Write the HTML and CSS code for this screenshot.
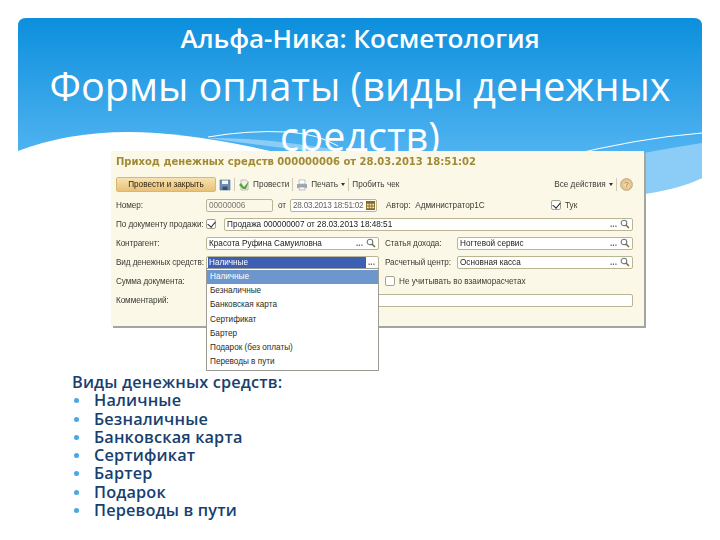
FILE: index.html
```html
<!DOCTYPE html>
<html lang="ru">
<head>
<meta charset="utf-8">
<title>Формы оплаты</title>
<link rel="stylesheet" href="styles.css">
</head>
<body>
<svg class="defs" width="0" height="0" aria-hidden="true">
  <symbol id="i-search" viewBox="0 0 10 10"><circle cx="4" cy="4" r="2.8" fill="#fff" stroke="#6b7a80" stroke-width="1.1"/><path d="M6 6 9 9" stroke="#8a6a20" stroke-width="1.5"/></symbol>
</svg>
<main class="slide">
  <svg class="wave" viewBox="0 0 684 180" preserveAspectRatio="none" aria-hidden="true">
    <defs><linearGradient id="sky" x1="0" y1="0" x2="0" y2="1"><stop offset="0" stop-color="#0c8fdc"/><stop offset=".75" stop-color="#4eb2f0"/><stop offset="1" stop-color="#55b6f1"/></linearGradient></defs>
    <path d="M0 8Q0 0 8 0H676Q684 0 684 8V160Q650 170 600 176L0 176Z" fill="url(#sky)"/>
    <path d="M190 120Q260 118 420 150L627 176Q665 170 684 160V125Q620 135 550 150Q400 150 190 120Z" fill="#8ccdf8"/>
    <path d="M190 119Q230 112 270 114Q300 116 320 128M684 115Q620 120 540 140" fill="none" stroke="#fff" stroke-width="1"/>
    <path d="M0 133Q50 114 110 114Q190 114 320 150V180H0Z" fill="#fff"/>
  </svg>
  <header class="head">
    <p class="subtitle">Альфа-Ника: Косметология</p>
    <h1 class="title">Формы оплаты (виды денежных средств)</h1>
  </header>

  <section class="panel">
    <h2 class="panel-title">Приход денежных средств 000000006 от 28.03.2013 18:51:02</h2>
    <div class="toolbar">
      <button class="primary" type="button">Провести и закрыть</button>
      <svg class="tool" viewBox="0 0 12 12" aria-hidden="true"><path d="M1 1H11V11H1Z" fill="#6f8fb5" stroke="#4a6a95" stroke-width=".6"/><path d="M3 1.5H9V5H3Z" fill="#f4f6f8"/><path d="M3.5 7.5H8.5V11H3.5Z" fill="#39506e"/></svg>
      <span class="sep"></span>
      <svg class="tool" viewBox="0 0 12 12" aria-hidden="true"><path d="M3 1H8L10 3V11H3Z" fill="#f2f2ea" stroke="#9a9a90" stroke-width=".6"/><path d="M1 6 3 4 6 8 11 2 8 10H5Z" fill="#5aa53a"/></svg>
      <span class="tool-text">Провести</span>
      <span class="sep"></span>
      <svg class="tool" viewBox="0 0 12 12" aria-hidden="true"><path d="M3 1H9V5H3Z" fill="#fff" stroke="#888" stroke-width=".5"/><path d="M1 5H11V9H1Z" fill="#9aa8b8"/><path d="M3 8H9V11H3Z" fill="#f4f4f4" stroke="#888" stroke-width=".5"/></svg>
      <span class="tool-text">Печать <i class="caret"></i></span>
      <span class="sep"></span>
      <span class="tool-text">Пробить чек</span>
      <span class="tool-text push">Все действия <i class="caret"></i></span>
      <span class="sep"></span>
      <span class="help">?</span>
    </div>

    <div class="form">
      <div class="row">
        <span class="label">Номер:</span>
        <span class="field w-number">00000006</span>
        <span class="inline-label">от</span>
        <span class="field w-date">28.03.2013 18:51:02
          <svg class="cal" viewBox="0 0 10 10" aria-hidden="true"><path d="M0 0H10V10H0Z" fill="#8a6a20"/><path d="M1 3H3V5H1ZM4 3H6V5H4ZM7 3H9V5H7ZM1 6H3V8H1ZM4 6H6V8H4ZM7 6H9V8H7Z" fill="#f3e6c0"/></svg>
        </span>
        <span class="author">Автор:&nbsp; Администратор1С</span>
        <span class="check on"></span>
        <span class="check-text">Тук</span>
      </div>
      <div class="row">
        <span class="label">По документу продажи:</span>
        <span class="check on"></span>
        <span class="field w-doc">Продажа 000000007 от 28.03.2013 18:48:51
          <span class="dots">...</span><svg class="mag" aria-hidden="true"><use href="#i-search"/></svg>
        </span>
      </div>
      <div class="row">
        <span class="label">Контрагент:</span>
        <span class="field w-left">Красота Руфина Самуиловна
          <span class="dots">...</span><svg class="mag" aria-hidden="true"><use href="#i-search"/></svg>
        </span>
        <span class="label-2">Статья дохода:</span>
        <span class="field w-right">Ногтевой сервис
          <span class="dots">...</span><svg class="mag" aria-hidden="true"><use href="#i-search"/></svg>
        </span>
      </div>
      <div class="row row-select">
        <span class="label">Вид денежных средств:</span>
        <span class="field w-left field-select"><span class="selected">Наличные</span><span class="dots">...</span></span>
        <span class="label-2">Расчетный центр:</span>
        <span class="field w-right">Основная касса
          <span class="dots">...</span><svg class="mag" aria-hidden="true"><use href="#i-search"/></svg>
        </span>
        <ul class="dropdown">
          <li class="active">Наличные</li>
          <li>Безналичные</li>
          <li>Банковская карта</li>
          <li>Сертификат</li>
          <li>Бартер</li>
          <li>Подарок (без оплаты)</li>
          <li>Переводы в пути</li>
        </ul>
      </div>
      <div class="row">
        <span class="label">Сумма документа:</span>
        <span class="spacer"></span>
        <span class="check"></span>
        <span class="check-text">Не учитывать во взаиморасчетах</span>
      </div>
      <div class="row">
        <span class="label">Комментарий:</span>
        <span class="field w-full"></span>
      </div>
    </div>
  </section>

  <section class="types">
    <p class="types-head">Виды денежных средств:</p>
    <ul class="types-list">
      <li>Наличные</li>
      <li>Безналичные</li>
      <li>Банковская карта</li>
      <li>Сертификат</li>
      <li>Бартер</li>
      <li>Подарок</li>
      <li>Переводы в пути</li>
    </ul>
  </section>
</main>
</body>
</html>
```

FILE: styles.css
```css
* { box-sizing: border-box; }
html, body { margin: 0; padding: 0; background: #fff; }
.defs { position: absolute; }
.slide {
  position: relative;
  width: 720px;
  height: 540px;
  padding: 18px 18px 0;
  overflow: hidden;
  font-family: "Open Sans", "Noto Sans", sans-serif;
}
.wave { position: absolute; left: 18px; top: 18px; width: 684px; height: 180px; }

.head { position: relative; height: 133px; text-align: center; color: #fff; }
.subtitle { margin: 0; padding-top: 3px; font-size: 26px; line-height: 34px; font-weight: 600; }
.title { margin: 0 auto; padding-top: 6px; width: 670px; font-size: 39.5px; line-height: 50px; font-weight: 500; }

.panel {
  position: relative;
  margin-left: 93px;
  width: 533px;
  height: 175px;
  padding: 4px 11px 0 5px;
  background: #fbf8e8;
  box-shadow: 2px 2px 0 #a5a5a0;
  font-family: "Liberation Sans", Arial, sans-serif;
  font-size: 8.2px;
  color: #3c3c34;
  filter: blur(.4px);
}
.panel-title { margin: 0; font-family: "DejaVu Sans", sans-serif; font-size: 10px; line-height: 14px; font-weight: 700; color: #a18a35; white-space: nowrap; }
.toolbar { display: flex; align-items: center; gap: 3px; height: 17px; margin-top: 7px; }
.primary {
  width: 100px; height: 15px; padding: 0;
  border: 1px solid #d8b878; border-radius: 2px;
  background: linear-gradient(#f8e2b0, #e9c078);
  font: 8.2px "Liberation Sans", Arial, sans-serif; color: #2c2410;
}
.tool { width: 12px; height: 12px; flex: none; }
.sep { width: 1px; height: 13px; background: #cfcbb4; flex: none; }
.tool-text { white-space: nowrap; }
.push { margin-left: auto; }
.caret { display: inline-block; width: 0; height: 0; border: 2.5px solid transparent; border-top: 3px solid #333; border-bottom: 0; vertical-align: middle; margin-left: 1px; }
.help {
  width: 13px; height: 13px; border-radius: 50%;
  background: radial-gradient(#f8e6c0, #d8a868);
  border: 1px solid #c9b08a;
  font-size: 8px; line-height: 11px; text-align: center; color: #a06a20;
}

.form { display: flex; flex-direction: column; gap: 5px; margin-top: 5px; }
.row { position: relative; display: flex; align-items: center; height: 14px; white-space: nowrap; }
.label { width: 90px; flex: none; letter-spacing: -.1px; }
.label-2 { width: 72px; margin-left: 6px; flex: none; letter-spacing: -.1px; }
.inline-label { width: 17px; padding-left: 5px; flex: none; }
.field {
  display: flex; align-items: center;
  height: 13px; padding: 0 2px;
  background: #fff;
  border: 1px solid #b9b595; border-radius: 2px;
  color: #22221c;
  overflow: hidden;
}
.w-number { width: 67px; color: #77776c; background: #fbf8e8; }
.w-date { width: 87px; padding-right: 1px; color: #66665c; justify-content: space-between; letter-spacing: -.25px; }
.w-doc { width: 409px; margin-left: 8px; }
.w-left { width: 173px; }
.w-right { width: 176px; }
.w-full { width: 427px; }
.cal { width: 9px; height: 9px; flex: none; }
.author { margin-left: 9px; width: 165px; }
.check { position: relative; width: 10px; height: 10px; flex: none; background: #fff; border: 1px solid #a5a290; border-radius: 2px; }
.check.on::after {
  content: ""; position: absolute; left: 2px; top: 0;
  width: 4px; height: 6px;
  border: solid #222; border-width: 0 1.2px 1.2px 0;
  transform: rotate(40deg);
}
.check-text { margin-left: 4px; }
.dots { margin-left: auto; width: 11px; flex: none; color: #6a6a50; font-weight: 700; text-align: center; }
.mag { width: 10px; height: 10px; flex: none; margin-left: 1px; }
.field-select { padding: 0 1px; }
.selected { display: block; width: 158px; height: 11px; line-height: 11px; padding-left: 1px; background: #3c5fb4; color: #fff; }
.spacer { width: 179px; flex: none; }

.dropdown {
  position: absolute;
  left: 90px; top: 13px;
  z-index: 2;
  width: 173px;
  margin: 0; padding: 1px 0;
  list-style: none;
  background: #fff;
  border: 1px solid #9c9c94;
  color: #2c2c28;
}
.dropdown li { height: 14.2px; line-height: 14.2px; padding-left: 3px; }
.dropdown .active { background: #6d96cc; color: #fff; }

.types {
  margin: 0 0 0 54px;
  padding-top: 47px;
  font-size: 16.3px;
  line-height: 18.25px;
  font-weight: 600;
  letter-spacing: .15px;
  color: #173f70;
}
.types-head { margin: 0; }
.types-list { margin: 0; padding: 0; list-style: none; }
.types-list li { position: relative; padding-left: 22px; }
.types-list li::before { content: ""; position: absolute; left: 2px; top: 7px; width: 5px; height: 5px; border-radius: 50%; background: #4aa6e4; }
```
